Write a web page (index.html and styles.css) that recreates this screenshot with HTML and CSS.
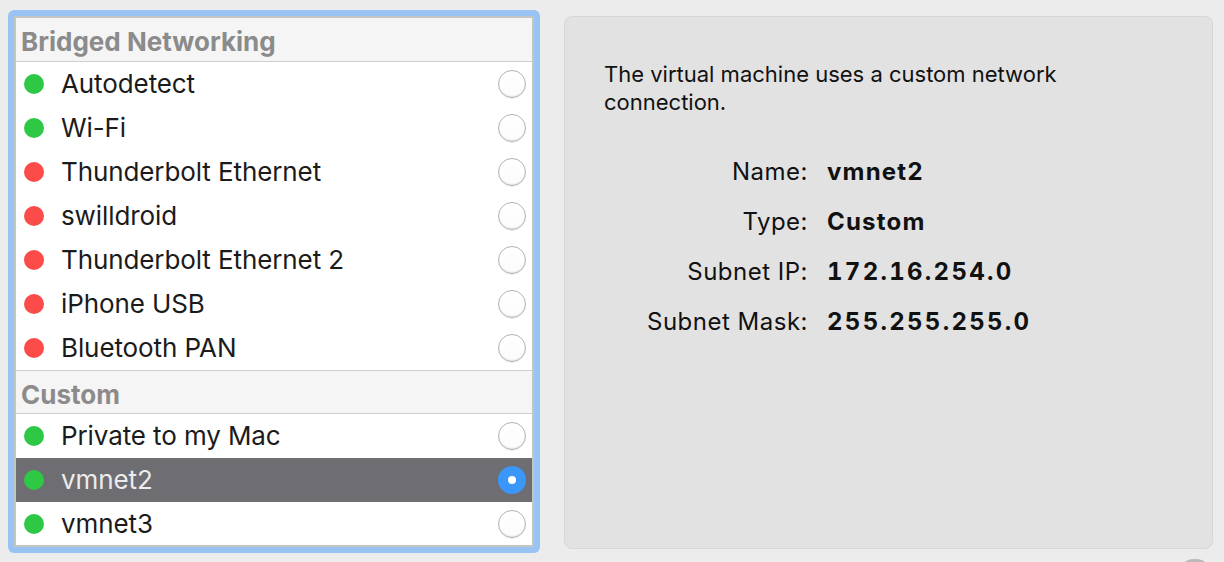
FILE: index.html
```html
<!DOCTYPE html>
<html>
<head>
<meta charset="utf-8">
<link rel="stylesheet" href="styles.css">
</head>
<body>
<div class="page">
  <div class="focus">
    <div class="list">
      <div class="group first">Bridged Networking</div>
      <div class="row"><span class="dot green"></span><span class="name">Autodetect</span><span class="radio"></span></div>
      <div class="row"><span class="dot green"></span><span class="name">Wi-Fi</span><span class="radio"></span></div>
      <div class="row"><span class="dot red"></span><span class="name">Thunderbolt Ethernet</span><span class="radio"></span></div>
      <div class="row"><span class="dot red"></span><span class="name">swilldroid</span><span class="radio"></span></div>
      <div class="row"><span class="dot red"></span><span class="name">Thunderbolt Ethernet 2</span><span class="radio"></span></div>
      <div class="row"><span class="dot red"></span><span class="name">iPhone USB</span><span class="radio"></span></div>
      <div class="row"><span class="dot red"></span><span class="name">Bluetooth PAN</span><span class="radio"></span></div>
      <div class="group">Custom</div>
      <div class="row"><span class="dot green"></span><span class="name">Private to my Mac</span><span class="radio"></span></div>
      <div class="row selected"><span class="dot green"></span><span class="name">vmnet2</span><span class="radio on"></span></div>
      <div class="row"><span class="dot green"></span><span class="name">vmnet3</span><span class="radio"></span></div>
    </div>
  </div>
  <div class="panel">
    <p class="desc">The virtual machine uses a custom network connection.</p>
    <div class="details">
      <span class="label">Name:</span><span class="value">vmnet2</span>
      <span class="label">Type:</span><span class="value">Custom</span>
      <span class="label">Subnet IP:</span><span class="value num">172.16.254.0</span>
      <span class="label">Subnet Mask:</span><span class="value num">255.255.255.0</span>
    </div>
  </div>
  <div class="peek"></div>
</div>
</body>
</html>
```

FILE: styles.css
```css
html, body {
  margin: 0;
  padding: 0;
  background: #ececec;
  font-family: Inter, "Liberation Sans", sans-serif;
  color: #1b1b1b;
  overflow: hidden;
}

.page {
  position: relative;
  display: flex;
  align-items: flex-start;
  padding: 10px 0 0 8px;
  height: 552px;
}

.focus {
  width: 520px;
  height: 531px;
  padding: 6px;
  background: #98c3f2;
  border-radius: 6px;
}

.list {
  height: 527px;
  overflow: hidden;
  border: 2px solid #c4c4c4;
  background: #ffffff;
}

.group {
  height: 38px;
  display: flex;
  align-items: center;
  padding: 4px 0 0 5px;
  background: #f5f5f5;
  border-top: 1px solid #d0d0d0;
  border-bottom: 1px solid #d0d0d0;
  color: #8b8b8b;
  font-weight: 700;
  font-size: 26px;
}

.group.first {
  border-top: none;
  height: 39px;
}

.row {
  height: 44px;
  display: flex;
  align-items: center;
  padding: 0 6px 1px 8px;
  box-sizing: border-box;
  font-size: 26px;
  letter-spacing: -0.1px;
}

.row.selected {
  background: #6e6d72;
  color: #ececec;
}

.dot {
  width: 20px;
  height: 20px;
  border-radius: 50%;
  flex: none;
}

.dot.green { background: #2ec845; }
.dot.red { background: #fb4c4a; }

.name {
  flex: 1;
  margin-left: 17px;
}

.radio {
  width: 26px;
  height: 26px;
  border-radius: 50%;
  border: 1px solid #b3b3b3;
  background: linear-gradient(#ffffff, #fbfbfb);
  box-shadow: inset 0 -1px 1px rgba(0,0,0,0.08), 0 1px 1px rgba(0,0,0,0.06);
  flex: none;
  display: flex;
  align-items: center;
  justify-content: center;
}

.radio.on {
  width: 28px;
  height: 28px;
  border: none;
  background: #3a97f9;
  box-shadow: none;
}

.radio.on::after {
  content: "";
  width: 8px;
  height: 8px;
  border-radius: 50%;
  background: #ffffff;
}

.panel {
  margin: 6px 0 0 24px;
  width: 608px;
  height: 488px;
  padding: 43px 0 0 39px;
  background: #e2e2e2;
  border: 1px solid #d7d7d7;
  border-radius: 8px;
}

.desc {
  margin: 0;
  width: 480px;
  font-size: 22px;
  line-height: 28px;
  color: #111;
}

.details {
  margin-top: 30px;
  display: grid;
  grid-template-columns: 204px auto;
  column-gap: 19px;
  grid-auto-rows: 50px;
  align-items: center;
  font-size: 24px;
  color: #111;
}

.label {
  text-align: right;
  letter-spacing: 0.5px;
}

.value {
  font-weight: 700;
  letter-spacing: 1.2px;
  font-variant-numeric: tabular-nums;
}

.value.num {
  letter-spacing: 2.3px;
}

.peek {
  position: absolute;
  left: 1184px;
  top: 559px;
  width: 22px;
  height: 10px;
  border-radius: 50%;
  background: #b9b9b9;
}
```
